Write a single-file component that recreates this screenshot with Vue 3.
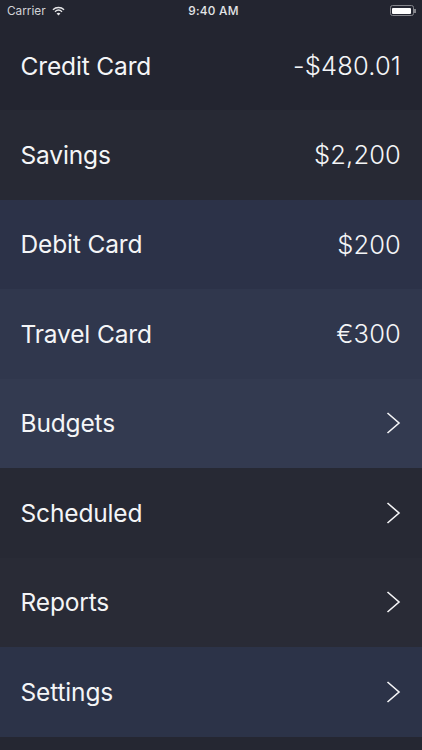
<script setup>
const rows = [
  { label: 'Credit Card', value: '-$480.01', tone: 'tone-1' },
  { label: 'Savings', value: '$2,200', tone: 'tone-2' },
  { label: 'Debit Card', value: '$200', tone: 'tone-3' },
  { label: 'Travel Card', value: '€300', tone: 'tone-4' },
  { label: 'Budgets', tone: 'tone-5' },
  { label: 'Scheduled', tone: 'tone-6' },
  { label: 'Reports', tone: 'tone-7' },
  { label: 'Settings', tone: 'tone-8' },
]
</script>

<template>
  <div class="screen">
    <div class="status">
      <div class="status-left">
        <span>Carrier</span>
        <svg class="wifi" width="13" height="10" viewBox="0 0 14 10">
          <path d="M1 3.6C4.4.5 9.6.5 13 3.6" fill="none" stroke="#e8e8ea" stroke-width="1.5" />
          <path d="M3.2 5.7c2.2-2 5.4-2 7.6 0" fill="none" stroke="#e8e8ea" stroke-width="1.5" />
          <path d="M7 9.8 4.9 7.6c1.2-1 3-1 4.2 0z" fill="#e8e8ea" />
        </svg>
      </div>
      <span class="clock">9:40 AM</span>
      <div class="status-right">
        <div class="battery"><span class="charge"></span></div>
      </div>
    </div>
    <div v-for="(row, index) in rows" :key="row.label" class="row" :class="[row.tone, { first: index === 0 }]">
      <span>{{ row.label }}</span>
      <span v-if="row.value" class="value">{{ row.value }}</span>
      <svg v-else class="chevron" width="15" height="22" viewBox="0 0 15 22">
        <path d="M1.5 1 13 11 1.5 21" fill="none" stroke="#f5f5f7" stroke-width="1.6" />
      </svg>
    </div>
  </div>
</template>

<style scoped>
.screen {
  position: relative;
  width: 422px;
  height: 750px;
  overflow: hidden;
  background: #252732;
  color: #f4f5f7;
  font-family: Inter, "Liberation Sans", sans-serif;
}
.status {
  position: absolute;
  inset: 0 0 auto;
  height: 21px;
  display: flex;
  align-items: center;
  justify-content: space-between;
  padding: 0 8px 0 7px;
  font-size: 11.8px;
  color: #d2d3d7;
}
.status-left {
  display: flex;
  align-items: center;
  gap: 6px;
  width: 126px;
}
.status-right {
  display: flex;
  justify-content: flex-end;
  width: 120px;
}
.clock {
  font-weight: 500;
  letter-spacing: 0.25px;
  color: #e4e5e8;
}
.battery {
  position: relative;
  display: flex;
  width: 24px;
  height: 11px;
  padding: 1.5px;
  box-sizing: border-box;
  border: 1px solid #85868c;
  border-radius: 2.5px;
}
.battery::after {
  content: "";
  position: absolute;
  right: -3px;
  top: 2.5px;
  width: 1.5px;
  height: 4px;
  background: #85868c;
}
.charge {
  flex: 1;
  background: #fff;
  border-radius: 1px;
}
.row {
  height: 89.5px;
  box-sizing: border-box;
  display: flex;
  align-items: center;
  justify-content: space-between;
  padding: 0 21px 0 20.5px;
  font-size: 24.5px;
  letter-spacing: -0.15px;
}
.row.first {
  height: 110px;
  padding-top: 21px;
}
.value {
  font-size: 25.5px;
  font-weight: 300;
  letter-spacing: 0.15px;
}
.tone-1 { background: #232530; }
.tone-2 { background: #272934; }
.tone-3 { background: #2c3248; }
.tone-4 { background: #30374d; }
.tone-5 { background: #333a50; }
.tone-6 { background: #272934; }
.tone-7 { background: #292b36; }
.tone-8 { background: #2c3348; }
</style>
